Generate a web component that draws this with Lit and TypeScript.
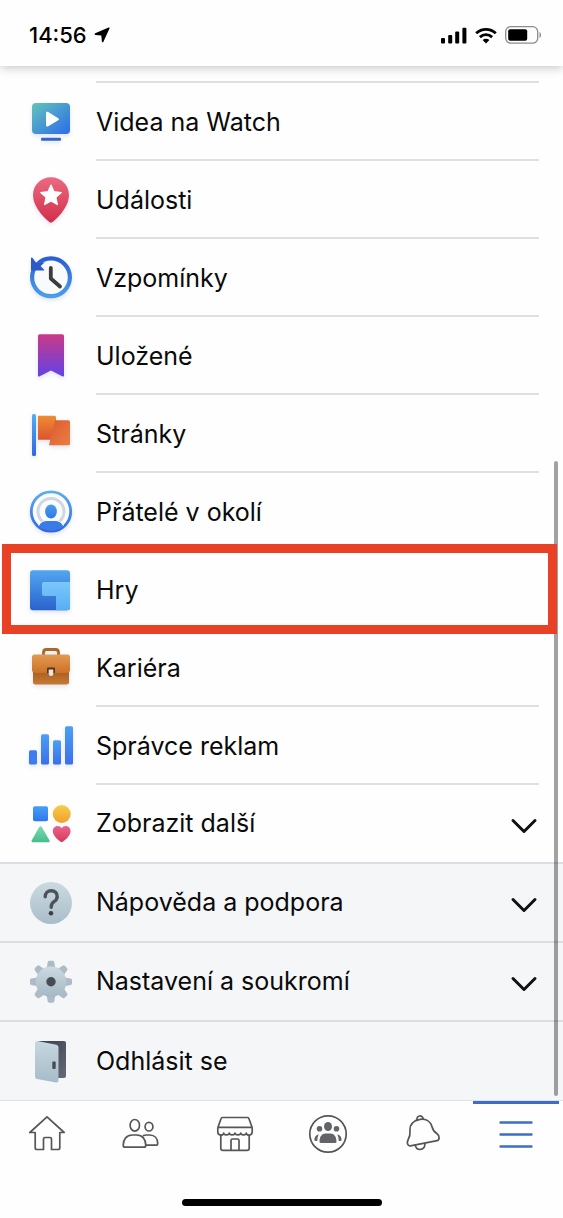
import { LitElement, html, css, svg, nothing } from "lit";
import { customElement, property, state } from "lit/decorators.js";

const grad = (id: string, from: string, to: string, diagonal = false) => svg`
  <linearGradient id=${id} x1="0" y1="0" x2=${diagonal ? "1" : "0"} y2="1">
    <stop offset="0" stop-color=${from}></stop>
    <stop offset="1" stop-color=${to}></stop>
  </linearGradient>`;

const teeth = [0, 45, 90, 135, 180, 225, 270, 315];

const icons: Record<string, unknown> = {
  watch: svg`
    <defs>${grad("watch", "#62c5ba", "#2c6bea", true)}</defs>
    <rect x="4" y="5" width="38" height="31" rx="4" fill="url(#watch)"></rect>
    <path d="M18 15.200c0-1.400 1-1.900 2.200-1.200l10 6.200c1 .6 1 1.500 0 2.100l-10 6c-1.200.7-2.200.2-2.200-1.200z" fill="#fff"></path>
    <rect x="13" y="39.700" width="20" height="3" rx="1" fill="#2f66cc"></rect>`,
  events: svg`
    <defs>${grad("events", "#ea6a82", "#d32f48")}</defs>
    <path d="M23 1.200C12.800 1.200 5 9 5 19c0 10.500 8.500 20.300 15.700 26.600 1.600 1.400 3 1.400 4.600 0C32.500 39.300 41 29.500 41 19 41 9 33.200 1.200 23 1.200z" fill="url(#events)"></path>
    <path d="M23 9l3 6.700 7.300.8-5.400 4.900 1.500 7.200L23 25l-6.400 3.600 1.500-7.200-5.400-4.900 7.300-.8z" fill="#fff" stroke="#fff" stroke-width="1.200" stroke-linejoin="round"></path>`,
  memories: svg`
    <defs>${grad("memring", "#2a5fd0", "#4a9eea")}</defs>
    <circle cx="23" cy="23.300" r="18.900" fill="#f8fafc" stroke="url(#memring)" stroke-width="4.200"></circle>
    <path d="M3 4.200v11.500c0 .6.300.9.900.9h11.600c.8 0 1-.7.500-1.200l-3.300-3.200c1.500-1.500 2.500-2.400 4.300-3.600L8.500 9.300 4.400 3.700C3.900 3.200 3 3.500 3 4.200z" fill="#2b59c8"></path>
    <path d="M22.800 14v10.500l9.200 8" fill="none" stroke="#3a3c40" stroke-width="3.800" stroke-linecap="round" stroke-linejoin="round"></path>`,
  saved: svg`
    <defs>${grad("saved", "#c93a86", "#6242e8")}</defs>
    <path d="M12 2.300h22c1.300 0 2 .7 2 2v39c0 1.200-.8 1.600-1.800 1L23 38.600l-11.200 5.700c-1 .6-1.800.2-1.800-1v-39c0-1.300.7-2 2-2z" fill="url(#saved)"></path>`,
  pages: svg`
    <defs>${grad("pole", "#52aef2", "#2f66e4")}${grad("flaga", "#ee8c32", "#db5530")}${grad("flagb", "#dd5a32", "#ea7e40", true)}</defs>
    <rect x="4" y="4" width="4" height="42" rx="1.500" fill="url(#pole)"></rect>
    <path d="M10 5.700h16.500q1.500 0 1.500 1.500V29.700H10z" fill="url(#flaga)"></path>
    <path d="M27 10.200h13.500q1.500 0 1.500 1.500v22q0 1.500-1.500 1.500H21z" fill="url(#flagb)"></path>`,
  nearby: svg`
    <defs>${grad("ring", "#5aaeea", "#2f68e2")}${grad("head", "#4a9eea", "#3378e8")}
      <clipPath id="inside"><circle cx="23" cy="23.500" r="19"></circle></clipPath></defs>
    <circle cx="23" cy="23.500" r="19.700" fill="#fbfcfe" stroke="url(#ring)" stroke-width="2.800"></circle>
    <circle cx="23" cy="23.500" r="13" fill="none" stroke="#cfd8e0" stroke-width="3"></circle>
    <g clip-path="url(#inside)">
      <path d="M9 46c0-9 4-13.500 10-13.500h8c6 0 10 4.500 10 13.500z" fill="#3a7bea" stroke="#fbfcfe" stroke-width="1"></path>
    </g>
    <ellipse cx="23" cy="23.500" rx="5.900" ry="6.900" fill="url(#head)"></ellipse>`,
  games: svg`
    <defs>${grad("games", "#52a6f0", "#2b62cc")}${grad("gamel", "#7cc6fa", "#58aef4")}</defs>
    <rect x="2" y="4.300" width="40" height="40" rx="3" fill="url(#games)"></rect>
    <path d="M16 16h26v25.300a3 3 0 0 1-3 3H28V30H16q-2 0-2-2V18q0-2 2-2z" fill="url(#gamel)"></path>`,
  jobs: svg`
    <defs>${grad("case", "#e29a52", "#cc7228")}${grad("caselow", "#a85c1c", "#c67a34")}</defs>
    <path d="M15.500 11V8.500c0-2 1-3 3-3h9c2 0 3 1 3 3V11" fill="none" stroke="#a8682c" stroke-width="2.800"></path>
    <path d="M5 26h36v12q0 2.500-2.500 2.500h-31Q5 40.500 5 38z" fill="url(#caselow)"></path>
    <path d="M6.500 10.500h33Q42 10.500 42 13v12.500q0 3.500-3.500 3.500h-31Q4 29 4 25.500V13q0-2.500 2.500-2.500z" fill="url(#case)"></path>
    <path d="M19 24.500q0-1 1-1h6q1 0 1 1V29h-8z" fill="#5c3014"></path>
    <path d="M20.700 25.500h4.600v4.300q0 2.300-2.300 2.300t-2.300-2.300z" fill="#e6e6ea"></path>`,
  ads: svg`
    <defs>${grad("bars", "#4c9ff2", "#3a70ea")}</defs>
    <rect x="1" y="28.300" width="8" height="14.200" rx="1.500" fill="#3d7cec"></rect>
    <rect x="13" y="12.300" width="8" height="30.200" rx="1.500" fill="url(#bars)"></rect>
    <rect x="25" y="18.300" width="8" height="24.200" rx="1.500" fill="url(#bars)"></rect>
    <rect x="37" y="4.300" width="8" height="38.200" rx="1.500" fill="url(#bars)"></rect>`,
  more: svg`
    <defs>${grad("sq", "#45a0f6", "#2f76ee")}${grad("dot", "#f8cc48", "#f0a030")}${grad("tri", "#7adcb0", "#44bd8c")}${grad("heart", "#ec6390", "#d83a54")}</defs>
    <rect x="5" y="5.300" width="15" height="15" rx="1.800" fill="url(#sq)"></rect>
    <circle cx="33.700" cy="13" r="9" fill="url(#dot)"></circle>
    <path d="M11.200 26q1.300-1.700 2.600 0l7.600 13.300q.8 2-1.200 2H5q-2 0-1.200-2z" fill="url(#tri)"></path>
    <path d="M33.700 41.300c-1 0-8.900-6-8.900-11 0-3 2-5.300 4.700-5.300 1.900 0 3.300.8 4.200 2.200.9-1.400 2.300-2.200 4.200-2.200 2.700 0 4.700 2.300 4.700 5.300 0 5-7.900 11-8.900 11z" fill="url(#heart)"></path>`,
  help: svg`
    <defs>${grad("help", "#cbdae1", "#a9bdc9")}</defs>
    <circle cx="23" cy="23" r="21" fill="url(#help)"></circle>
    <path d="M17.200 16.800c0-3.600 2.400-6 6-6s6 2.300 6 5.600c0 2.600-1.300 3.900-3.200 5.200-2 1.300-2.800 2.400-2.800 5.600" fill="none" stroke="#4c525a" stroke-width="3.400" stroke-linecap="round"></path>
    <circle cx="23" cy="33.300" r="2.300" fill="#3c4046"></circle>`,
  settings: svg`
    <defs>${grad("gear", "#ccdae1", "#a4b8c4")}</defs>
    ${teeth.map((a) => svg`<path d="M18.600 9.500l1.200-6.300q.3-1.400 1.600-1.400h3.200q1.300 0 1.600 1.400l1.200 6.300z" transform="rotate(${a} 23 22.800)" fill="#acbbc5"></path>`)}
    <circle cx="23" cy="22.800" r="15.300" fill="url(#gear)"></circle>
    <circle cx="23" cy="22.800" r="4.700" fill="#484c55"></circle>`,
  logout: svg`
    <defs>${grad("door", "#c6d7df", "#a6bcc8")}${grad("back", "#3a3e48", "#646a76", true)}</defs>
    <path d="M10 3h26q2 0 2 2v33q0 2-2 2H24z" fill="url(#back)"></path>
    <path d="M9.600 3.100L28.500 6.800q2 .5 2 2.500V42.500q0 2.500-2.500 2L9 41q-2-.5-2-2.500V5q0-2 2.600-1.900z" fill="url(#door)"></path>
    <rect x="24.300" y="23.500" width="3.400" height="7.500" rx="1" fill="#484c55"></rect>`,
};

const tabs = [
  {
    label: "Domů",
    art: svg`<path d="M2.800 18.500L20 2.800l17.200 15.700h-4.400v15.200q0 1.800-1.800 1.800h-6.500V25q0-1.500-1.500-1.500h-5q-1.500 0-1.500 1.500v10.500H10q-1.800 0-1.800-1.800V18.500z"></path>`,
  },
  {
    label: "Přátelé",
    art: svg`<ellipse cx="13.800" cy="11.300" rx="4.700" ry="5.800"></ellipse><ellipse cx="28" cy="12.700" rx="3.900" ry="4.300"></ellipse>
      <path d="M4.200 33.200q-2 0-2-2c0-6 3.500-10.200 9-10.200h4.600c5.500 0 9 4.200 9 10.200q0 2-2 2z"></path>
      <path d="M22.500 21.600q1.200-.6 3-.6h3.200c4.800 0 8 3.200 8 8.500q0 1.700-1.700 1.700H25"></path>`,
  },
  {
    label: "Marketplace",
    art: svg`<path d="M7.500 3.500h25q1.200 0 1.500 1.200l3.200 9v4.300c0 4-5.800 4-5.800 1 0 2.600-5.700 2.600-5.700 0 0 2.600-5.700 2.600-5.700 0 0 2.600-5.700 2.600-5.700 0 0 2.600-5.700 2.600-5.700 0 0 3-5.800 3-5.800-1v-4.300l3.200-9q.3-1.200 1.500-1.200zM3 13.300h34"></path>
      <path d="M5.800 21v13.200q0 2.200 2.200 2.200h24q2.200 0 2.200-2.200V21M16 36.400V26.500q0-1.500 1.500-1.500h5q1.500 0 1.500 1.500v9.900"></path>`,
  },
  {
    label: "Skupiny",
    art: svg`<circle cx="20" cy="20" r="18.200"></circle>
      <g class="solid"><ellipse cx="20" cy="12.500" rx="4" ry="4.600"></ellipse><circle cx="11.500" cy="14.800" r="2.800"></circle><circle cx="28.500" cy="14.800" r="2.800"></circle>
      <path d="M13 29q-1.500 0-1.500-1.500c0-5 2.500-8 6-8h5c3.500 0 6 3 6 8q0 1.500-1.500 1.500zM10.800 20.500c-2.500 0-4.400 2.300-4.400 5.600q0 1 1.200 1h1.700c0-2.700.5-5 1.500-6.600zM29.200 20.500c2.500 0 4.400 2.300 4.400 5.600q0 1-1.200 1h-1.700c0-2.700-.5-5-1.500-6.600z"></path></g>`,
  },
  {
    label: "Upozornění",
    art: svg`<path d="M15 6.300c-1-5 5.500-6 6.200-1.500"></path>
      <path d="M18 5.400c6-1 10.500 2 12 7.300 1 4 2 5 4.800 6.800 2.700 2 3.200 6.300.4 7.200L8.500 31.800c-3 .4-4-3-2.300-6.300 1.800-3 2.200-4.800 1.800-9C7.600 10.500 11.500 6.300 18 5.400z"></path>
      <path d="M13.200 31.200c1.300 6.300 10 5.500 9.700-1.700"></path>`,
  },
  { label: "Nabídka", art: svg`<path d="M4.500 8.500h31M4.500 20.500h31M4.500 32.500h31"></path>` },
];

@customElement("menu-row")
class MenuRow extends LitElement {
  @property() icon = "";
  @property() label = "";
  @property({ type: Boolean }) expandable = false;
  @property({ type: Boolean, reflect: true }) full = false;
  @property({ type: Boolean, reflect: true }) last = false;
  @property({ type: Boolean, reflect: true }) marked = false;
  @state() private open = false;

  static styles = css`
    :host {
      display: block;
      position: relative;
    }
    :host([marked]) {
      z-index: 3;
    }
    :host([full]) {
      border-bottom: 2px solid #dcdde1;
    }
    .row {
      box-sizing: border-box;
      width: 100%;
      display: flex;
      gap: 22px;
      padding: 0 24px 0 28px;
      margin: 0;
      border: 0;
      background: none;
      color: #0a0a0a;
      font: 400 25px/30px Inter, "Noto Sans", sans-serif;
      text-align: left;
      text-decoration: none;
      cursor: pointer;
    }
    .icon {
      width: 46px;
      height: 46px;
      flex: none;
      overflow: visible;
      align-self: center;
      margin-bottom: 2px;
      filter: drop-shadow(0 2px 2px rgba(60, 80, 140, 0.16));
    }
    :host([full]) .icon,
    :host([last]) .icon {
      margin-bottom: 0;
      filter: none;
    }
    .body {
      box-sizing: border-box;
      flex: 1;
      display: flex;
      align-items: center;
      justify-content: space-between;
      min-height: 78px;
      padding-top: 2px;
      border-bottom: 2px solid #e0e0e2;
    }
    :host([full]) .body {
      min-height: 77px;
      padding: 0 0 2px;
      border: 0;
    }
    :host([last]) .body {
      padding: 0;
      border: 0;
    }
    .chevron {
      width: 30px;
      height: 18px;
      margin-top: 6px;
      fill: none;
      stroke: #111;
      stroke-width: 3;
      stroke-linecap: round;
      stroke-linejoin: round;
    }
    .mark {
      position: absolute;
      inset: -7px 6px -5px 2px;
      border: 9px solid #e94126;
      pointer-events: none;
    }
  `;

  private content() {
    return html`<svg class="icon" viewBox="0 0 46 46" aria-hidden="true">${icons[this.icon]}</svg>
      <span class="body"
        ><span>${this.label}</span>${this.expandable
          ? html`<svg class="chevron" viewBox="0 0 30 18" aria-hidden="true"><path d="M4 3.500l11 11 11-11"></path></svg>`
          : nothing}</span
      >`;
  }

  render() {
    return html`${this.expandable
      ? html`<button class="row" type="button" aria-expanded=${this.open} @click=${() => (this.open = !this.open)}>
          ${this.content()}
        </button>`
      : html`<a class="row" href="#${this.icon}">${this.content()}</a>`}
    ${this.marked ? html`<span class="mark"></span>` : nothing}`;
  }
}

@customElement("status-bar")
class StatusBar extends LitElement {
  static styles = css`
    :host {
      display: flex;
      justify-content: space-between;
      align-items: center;
      padding: 18px 21px 18px 29px;
      position: relative;
      z-index: 2;
      background: #fefefe;
      box-shadow: 0 1px 10px rgba(0, 0, 0, 0.26);
      font: 500 22px/26px Inter, "Noto Sans", sans-serif;
      color: #000;
    }
    .side {
      display: flex;
      align-items: center;
      gap: 7px;
      padding-top: 4px;
    }
    .right {
      gap: 8px;
    }
  `;

  render() {
    return html`<div class="side">
        <span>14:56</span>
        <svg width="16" height="16" viewBox="0 0 16 16"><path d="M14.600.5L1.200 6.300c-1 .5-.7 1.500.3 1.600l5.800.5.600 6c.1 1 1.100 1.200 1.500.3L15.500 1.500c.3-.7-.2-1.200-.9-1z"></path></svg>
      </div>
      <div class="side right">
        <svg width="26" height="17" viewBox="0 0 26 17">
          <rect y="11" width="4" height="5.500" rx="1"></rect><rect x="7.200" y="8" width="4" height="8.500" rx="1"></rect>
          <rect x="14.200" y="4.500" width="4" height="12" rx="1"></rect><rect x="21.400" y=".8" width="4" height="15.700" rx="1"></rect>
        </svg>
        <svg width="22" height="17" viewBox="0 0 22 17">
          <path d="M1.200 6.200c5.500-5.200 14.100-5.200 19.600 0M4.900 10.100c3.500-3.200 8.700-3.200 12.200 0" fill="none" stroke="#000" stroke-width="2.800"></path>
          <path d="M11 16.500l-3.400-3.400c1.900-1.700 4.900-1.700 6.800 0z"></path>
        </svg>
        <svg width="37" height="18" viewBox="0 0 37 18">
          <rect x=".7" y=".7" width="32" height="16.500" rx="5" fill="none" stroke="#8c8c8c" stroke-width="1.300"></rect>
          <rect x="3.200" y="3.200" width="19" height="11.500" rx="2"></rect>
          <path d="M34.500 6v6c2-.8 2-5.200 0-6z" fill="#8c8c8c"></path>
        </svg>
      </div>`;
  }
}

@customElement("tab-bar")
class TabBar extends LitElement {
  @state() private current = 5;

  static styles = css`
    :host {
      display: block;
      background: #fefefe;
      border-top: 1px solid #e0e2e4;
    }
    .tabs {
      display: grid;
      grid-template-columns: repeat(6, 1fr);
    }
    .tab {
      padding: 10px 0 45px;
      border: 0;
      border-top: 3px solid transparent;
      margin: 0 4px;
      background: none;
      display: flex;
      justify-content: center;
      cursor: pointer;
    }
    .tab[aria-current="page"] {
      border-color: #3d6dcc;
    }
    .art {
      width: 40px;
      height: 40px;
      fill: none;
      stroke: #55565a;
      stroke-width: 1.7;
      stroke-linejoin: round;
      stroke-linecap: round;
    }
    .solid {
      fill: #636468;
      stroke: none;
    }
    .tab[aria-current="page"] .art {
      stroke: #3d6dcc;
      stroke-width: 2.4;
    }
    .home {
      width: 200px;
      height: 7px;
      border-radius: 4px;
      background: #000;
      margin: 0 auto 12px;
    }
  `;

  render() {
    return html`<nav class="tabs">
        ${tabs.map(
          (t, i) => html`<button
            class="tab"
            type="button"
            aria-label=${t.label}
            aria-current=${i === this.current ? "page" : "false"}
            @click=${() => (this.current = i)}
          >
            <svg class="art" viewBox="0 0 40 40" aria-hidden="true">${t.art}</svg>
          </button>`
        )}
      </nav>
      <div class="home"></div>`;
  }
}

const shortcuts = [
  ["watch", "Videa na Watch"],
  ["events", "Události"],
  ["memories", "Vzpomínky"],
  ["saved", "Uložené"],
  ["pages", "Stránky"],
  ["nearby", "Přátelé v okolí"],
  ["games", "Hry"],
  ["jobs", "Kariéra"],
  ["ads", "Správce reklam"],
];

@customElement("app-root")
class AppRoot extends LitElement {
  static styles = css`
    :host {
      display: flex;
      flex-direction: column;
      min-height: 100vh;
      background: #fefefe;
    }
    .content {
      position: relative;
      flex: 1;
      display: flex;
      flex-direction: column;
    }
    .top {
      height: 15px;
      margin: 0 24px 0 96px;
      border-bottom: 2px solid #e0e0e2;
    }
    .account {
      flex: 1;
      background: #f5f6f8;
    }
    .thumb {
      position: absolute;
      top: 38.2%;
      right: 5px;
      bottom: 4px;
      width: 4px;
      border-radius: 2px;
      background: rgba(0, 0, 0, 0.36);
      z-index: 1;
    }
  `;

  render() {
    return html`<status-bar></status-bar>
      <main class="content">
        <div class="top"></div>
        ${shortcuts.map(
          ([icon, label]) => html`<menu-row icon=${icon} label=${label} ?marked=${icon === "games"}></menu-row>`
        )}
        <menu-row icon="more" label="Zobrazit další" expandable full></menu-row>
        <section class="account">
          <menu-row icon="help" label="Nápověda a podpora" expandable full></menu-row>
          <menu-row icon="settings" label="Nastavení a soukromí" expandable full></menu-row>
          <menu-row icon="logout" label="Odhlásit se" last></menu-row>
        </section>
        <div class="thumb"></div>
      </main>
      <tab-bar></tab-bar>`;
  }
}
